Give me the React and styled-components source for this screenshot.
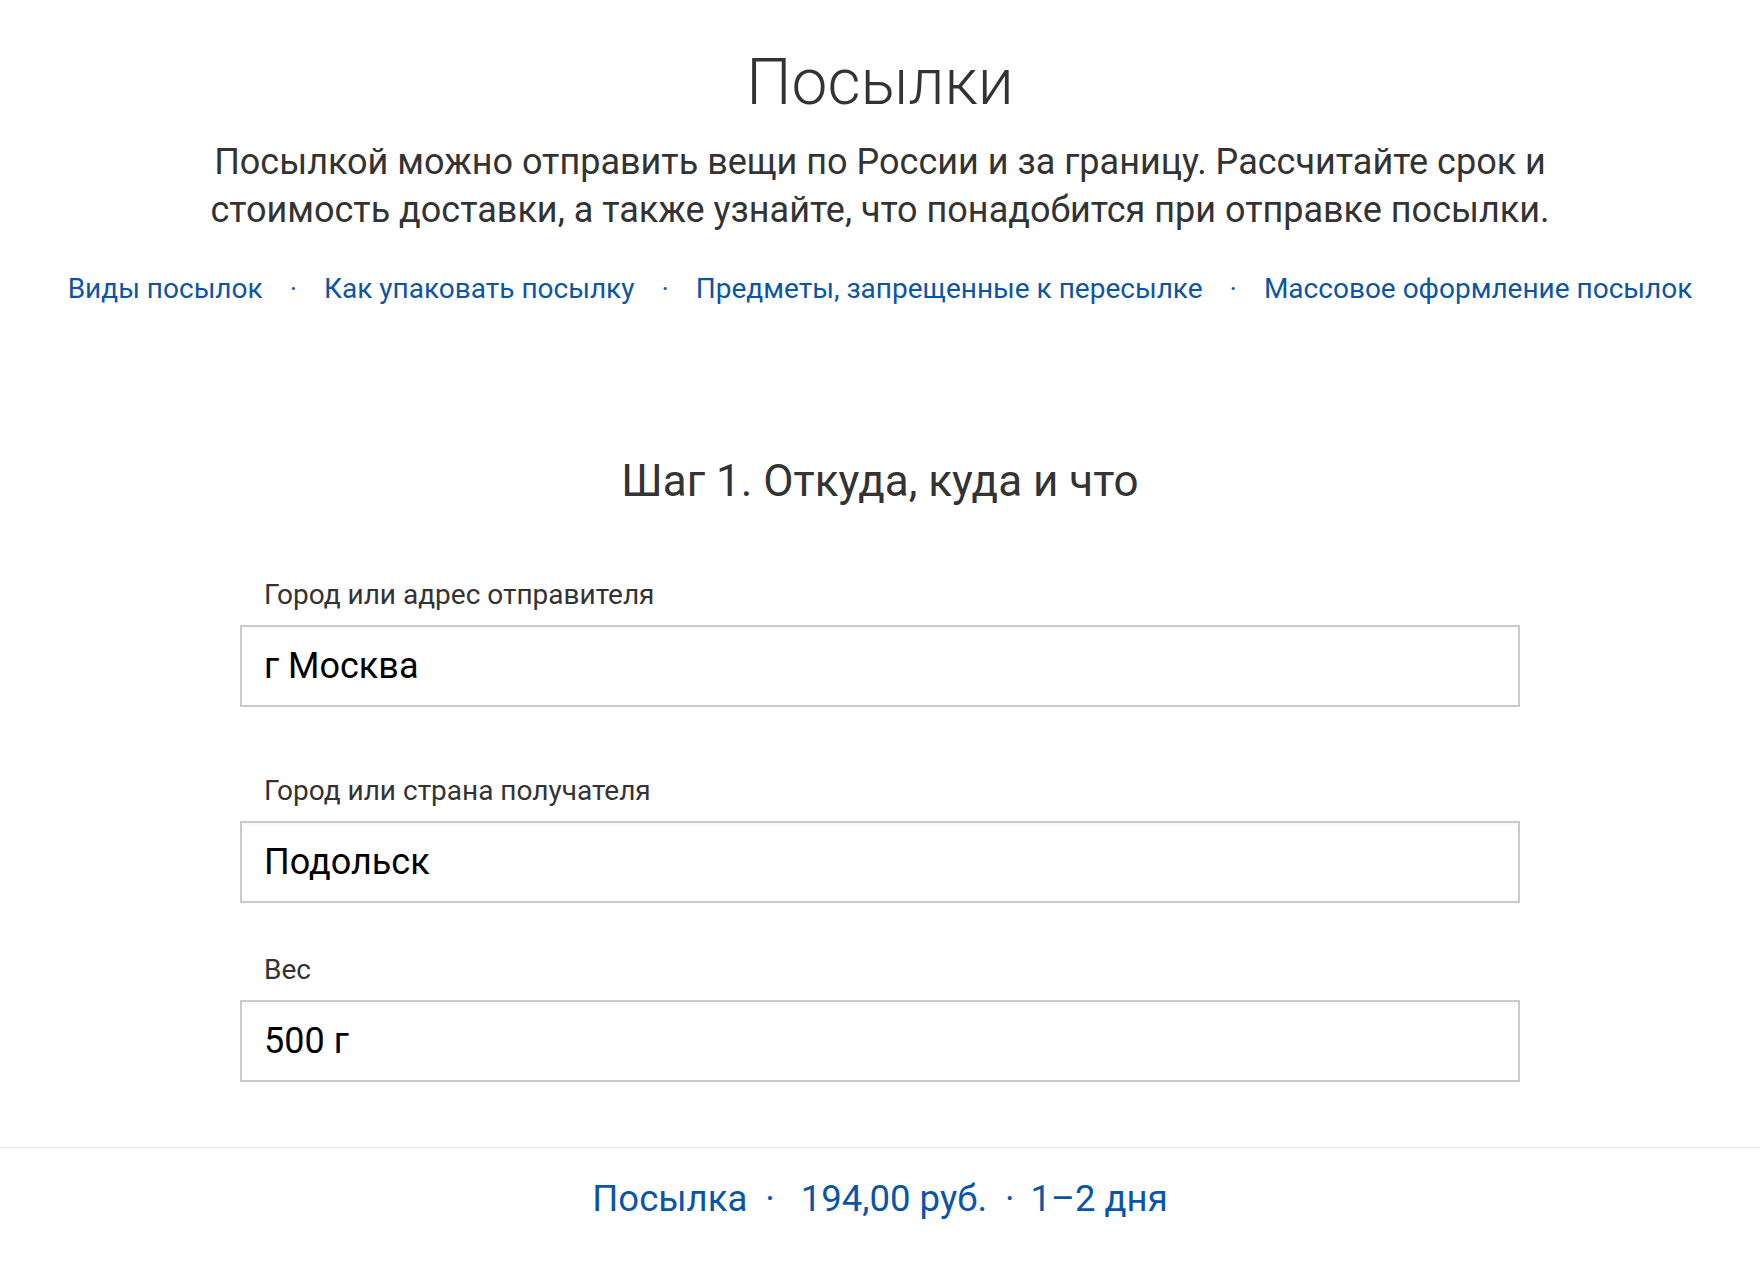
import React from "react";
import styled, { createGlobalStyle } from "styled-components";

const GlobalStyle = createGlobalStyle`
  html, body {
    margin: 0;
    padding: 0;
    background: #fff;
  }
  body {
    font-family: Roboto, "Noto Sans", "Liberation Sans", sans-serif;
    color: #333;
  }
`;

const links = [
  "Виды посылок",
  "Как упаковать посылку",
  "Предметы, запрещенные к пересылке",
  "Массовое оформление посылок"
];

const fields = [
  { label: "Город или адрес отправителя", value: "г Москва", gap: 67 },
  { label: "Город или страна получателя", value: "Подольск", gap: 50 },
  { label: "Вес", value: "500 г", gap: 0 }
];

export default function App() {
  return (
    <>
      <GlobalStyle />
      <Page>
        <Intro>
          <Title>Посылки</Title>
          <Lead>
            Посылкой можно отправить вещи по России и за границу. Рассчитайте
            срок и стоимость доставки, а также узнайте, что понадобится при
            отправке посылки.
          </Lead>
          <LinkRow>
            {links.map((text, i) => (
              <React.Fragment key={text}>
                {i > 0 && <Dot>·</Dot>}
                <NavLink href="#">{text}</NavLink>
              </React.Fragment>
            ))}
          </LinkRow>
        </Intro>

        <Step>
          <StepTitle>Шаг 1. Откуда, куда и что</StepTitle>
          <Form>
            {fields.map(f => (
              <Field key={f.label} gap={f.gap}>
                <Label>{f.label}</Label>
                <Input defaultValue={f.value} />
              </Field>
            ))}
          </Form>
        </Step>

        <Summary>
          <SummaryItem>Посылка</SummaryItem>
          <SummaryDot after={26}>·</SummaryDot>
          <SummaryItem>194,00 руб.</SummaryItem>
          <SummaryDot after={16}>·</SummaryDot>
          <SummaryItem>1–2 дня</SummaryItem>
        </Summary>
      </Page>
    </>
  );
}

// Styled Components
const Page = styled.div`
  width: 1760px;
  min-height: 1288px;
  padding-top: 45px;
  box-sizing: border-box;
`;

const Intro = styled.div`
  display: flex;
  flex-direction: column;
  align-items: center;
  text-align: center;
`;

const Title = styled.h1`
  margin: 0;
  font-size: 64px;
  font-weight: 300;
  line-height: 76px;
  color: #333;
`;

const Lead = styled.p`
  margin: 17px 0 0;
  max-width: 1400px;
  font-size: 36px;
  line-height: 48px;
  color: #333;
`;

const LinkRow = styled.div`
  display: flex;
  align-items: baseline;
  justify-content: center;
  margin-top: 37px;
  font-size: 28px;
  line-height: 36px;
`;

const NavLink = styled.a`
  color: #0c55a6;
  text-decoration: none;
  white-space: nowrap;
`;

const Dot = styled.span`
  color: #0c55a6;
  padding: 0 27px;
`;

const Step = styled.section`
  margin-top: 148px;
  display: flex;
  flex-direction: column;
  align-items: center;
`;

const StepTitle = styled.h2`
  margin: 0;
  font-size: 44px;
  font-weight: 400;
  line-height: 52px;
  color: #333;
`;

const Form = styled.div`
  width: 1280px;
  margin-top: 71px;
  display: flex;
  flex-direction: column;
`;

const Field = styled.label`
  display: flex;
  flex-direction: column;
  gap: 13px;
  margin-bottom: ${p => p.gap}px;
`;

const Label = styled.span`
  padding-left: 24px;
  font-size: 28px;
  line-height: 34px;
  color: #333;
`;

const Input = styled.input`
  box-sizing: border-box;
  width: 100%;
  height: 82px;
  margin: 0;
  padding: 0 22px;
  border: 2px solid #cacaca;
  border-radius: 0;
  box-shadow: inset 0 2px 2px rgba(0, 0, 0, 0.03);
  background: #fff;
  font-family: Roboto, "Noto Sans", "Liberation Sans", sans-serif;
  font-size: 36px;
  color: #000;
  outline: none;
`;

const Summary = styled.div`
  margin-top: 65px;
  border-top: 1px solid #e2e2e2;
  padding-top: 29px;
  display: flex;
  justify-content: center;
  align-items: baseline;
  font-size: 36.5px;
  line-height: 44px;
  color: #0c55a6;
`;

const SummaryItem = styled.span`
  white-space: nowrap;
`;

const SummaryDot = styled.span`
  padding: 0 ${p => p.after}px 0 18px;
`;
